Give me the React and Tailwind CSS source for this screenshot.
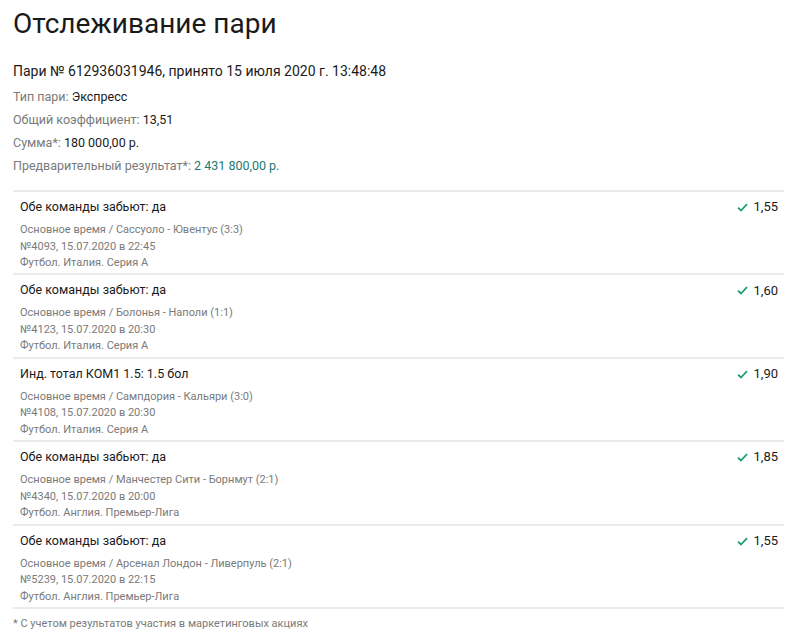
const bets = [
  {
    title: "Обе команды забьют: да",
    event: "Основное время / Сассуоло - Ювентус (3:3)",
    num: "№4093, 15.07.2020 в 22:45",
    league: "Футбол. Италия. Серия А",
    odd: "1,55",
  },
  {
    title: "Обе команды забьют: да",
    event: "Основное время / Болонья - Наполи (1:1)",
    num: "№4123, 15.07.2020 в 20:30",
    league: "Футбол. Италия. Серия А",
    odd: "1,60",
  },
  {
    title: "Инд. тотал КОМ1 1.5: 1.5 бол",
    event: "Основное время / Сампдория - Кальяри (3:0)",
    num: "№4108, 15.07.2020 в 20:30",
    league: "Футбол. Италия. Серия А",
    odd: "1,90",
  },
  {
    title: "Обе команды забьют: да",
    event: "Основное время / Манчестер Сити - Борнмут (2:1)",
    num: "№4340, 15.07.2020 в 20:00",
    league: "Футбол. Англия. Премьер-Лига",
    odd: "1,85",
  },
  {
    title: "Обе команды забьют: да",
    event: "Основное время / Арсенал Лондон - Ливерпуль (2:1)",
    num: "№5239, 15.07.2020 в 22:15",
    league: "Футбол. Англия. Премьер-Лига",
    odd: "1,55",
  },
];

function Check() {
  return (
    <svg width="11" height="9" viewBox="0 0 11 9" className="mt-[1px]">
      <path d="M1 4.6 L4 7.5 L10 1.2" fill="none" stroke="#1f9d6b" strokeWidth="1.8" />
    </svg>
  );
}

export default function App() {
  return (
    <div className="bg-white w-[800px] h-[635px] overflow-hidden px-[13px] text-[#1a1a1a]" style={{ fontFamily: "Roboto, sans-serif" }}>
      <h1 className="text-[28px] leading-[32px] pt-[8px]">Отслеживание пари</h1>
      <div className="mt-[21px] text-[14px] leading-[20px]">
        Пари № 612936031946, принято 15 июля 2020 г. 13:48:48
      </div>
      <div className="mt-[4px] text-[12.5px] leading-[23px]">
        <div><span className="text-[#7a7a7a]">Тип пари: </span>Экспресс</div>
        <div><span className="text-[#7a7a7a]">Общий коэффициент: </span>13,51</div>
        <div><span className="text-[#7a7a7a]">Сумма*: </span>180 000,00 р.</div>
        <div><span className="text-[#7a7a7a]">Предварительный результат*: </span><span className="text-[#1e7a73]">2 431 800,00 р.</span></div>
      </div>
      <div className="mt-[13px] w-[771px] border-t-2 border-[#ebebeb]">
        {bets.map((b, i) => (
          <div key={i} className="flex justify-between border-b-2 border-[#ebebeb] pl-[7px] pr-[6px] h-[83.4px] pt-[6px]">
            <div>
              <div className="text-[12.5px] leading-[18px]">{b.title}</div>
              <div className="mt-[6px] text-[11px] leading-[16.5px] text-[#7a7a7a]">
                <div>{b.event}</div>
                <div>{b.num}</div>
                <div>{b.league}</div>
              </div>
            </div>
            <div className="flex items-center gap-[6px] h-[18px] text-[13px]">
              <Check />
              <span>{b.odd}</span>
            </div>
          </div>
        ))}
      </div>
      <div className="mt-[7px] text-[11px] text-[#7a7a7a]">* С учетом результатов участия в маркетинговых акциях</div>
    </div>
  );
}
